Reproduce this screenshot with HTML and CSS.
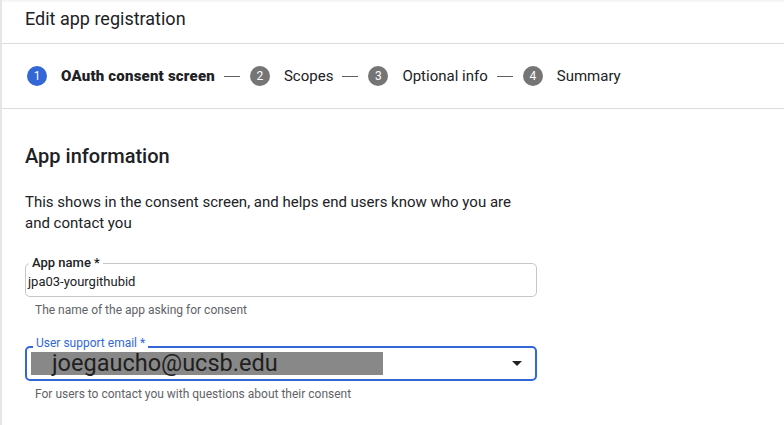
FILE: index.html
```html
<!DOCTYPE html>
<html>
<head>
<meta charset="utf-8">
<link rel="stylesheet" href="styles.css">
</head>
<body>
<div class="page">
  <header class="header">
    <h1 class="title">Edit app registration</h1>
  </header>
  <nav class="stepper">
    <span class="step-num active">1</span>
    <span class="step-label active">OAuth consent screen</span>
    <span class="dash"></span>
    <span class="step-num">2</span>
    <span class="step-label">Scopes</span>
    <span class="dash"></span>
    <span class="step-num">3</span>
    <span class="step-label">Optional info</span>
    <span class="dash"></span>
    <span class="step-num">4</span>
    <span class="step-label">Summary</span>
  </nav>
  <main class="content">
    <h2 class="section-title">App information</h2>
    <p class="intro">This shows in the consent screen, and helps end users know who you are and contact you</p>

    <div class="field">
      <div class="outline">
        <label class="float-label">App name *</label>
        <span class="value">jpa03-yourgithubid</span>
      </div>
      <div class="hint">The name of the app asking for consent</div>
    </div>

    <div class="field email-field">
      <div class="outline focused">
        <label class="float-label blue">User support email *</label>
        <span class="redacted">joegaucho@ucsb.edu</span>
        <span class="arrow"></span>
      </div>
      <div class="hint">For users to contact you with questions about their consent</div>
    </div>
  </main>
</div>
</body>
</html>
```
FILE: styles.css
```css
html, body {
  margin: 0;
  padding: 0;
  background: #fff;
}
body {
  font-family: Roboto, "Liberation Sans", Arial, sans-serif;
  color: #202124;
}
.page {
  width: 784px;
  height: 425px;
  border-left: 2px solid #e6e6e6;
  box-sizing: border-box;
  overflow: hidden;
}
.header {
  height: 43px;
  border-bottom: 1px solid #dadce0;
  box-shadow: inset 0 3px 3px -2px rgba(0,0,0,0.08);
  padding-left: 23px;
}
.title {
  margin: 0;
  padding-top: 7px;
  font-size: 18px;
  line-height: 24px;
  font-weight: 400;
  color: #202124;
}
.stepper {
  height: 64px;
  border-bottom: 1px solid #dadce0;
  display: flex;
  align-items: center;
  padding-left: 25px;
  font-size: 15px;
}
.step-num {
  width: 20px;
  height: 20px;
  border-radius: 50%;
  background: #757575;
  color: #fff;
  font-size: 12px;
  line-height: 20px;
  text-align: center;
  flex: none;
}
.step-num.active {
  background: #3367d6;
}
.step-label {
  margin-left: 14px;
  color: #202124;
}
.step-label.active {
  font-weight: 900;
  letter-spacing: 0.2px;
}
.dash {
  width: 16px;
  height: 1px;
  background: #5f6368;
  margin: 1px 10px 0 9px;
}
.content {
  padding: 33px 0 0 23px;
  width: 512px;
}
.section-title {
  margin: 0;
  font-size: 20px;
  line-height: 28px;
  font-weight: 500;
  color: #202124;
}
.intro {
  margin: 22px 0 0 0;
  font-size: 15px;
  line-height: 21px;
  color: #202124;
}
.field {
  margin-top: 29px;
}
.email-field {
  margin-top: 28px;
}
.outline {
  position: relative;
  height: 34px;
  border: 1px solid #c6c6c6;
  border-radius: 5px;
  box-sizing: border-box;
  display: flex;
  align-items: center;
  padding-left: 2px;
  padding-top: 2px;
}
.outline.focused {
  height: 35px;
  border: 2px solid #3367d6;
  padding: 0 13px 0 4px;
}
.float-label {
  position: absolute;
  top: -9px;
  left: 3px;
  background: #fff;
  padding: 0 3px;
  font-size: 13px;
  line-height: 16px;
  font-weight: 500;
  color: #202124;
}
.float-label.blue {
  left: 6px;
  top: -11px;
  font-size: 12px;
  line-height: 12px;
  font-weight: 400;
  color: #3367d6;
}
.value {
  font-size: 13px;
  color: #202124;
}
.redacted {
  display: inline-block;
  width: 331px;
  height: 23px;
  background: #888888;
  padding-left: 21px;
  font-size: 23.5px;
  line-height: 23px;
  color: #1f1f1f;
}
.arrow {
  margin-left: auto;
  width: 0;
  height: 0;
  border-left: 5px solid transparent;
  border-right: 5px solid transparent;
  border-top: 5px solid #202124;
}
.hint {
  margin: 5px 0 0 10px;
  font-size: 12px;
  line-height: 16px;
  color: #5f6368;
}
```
